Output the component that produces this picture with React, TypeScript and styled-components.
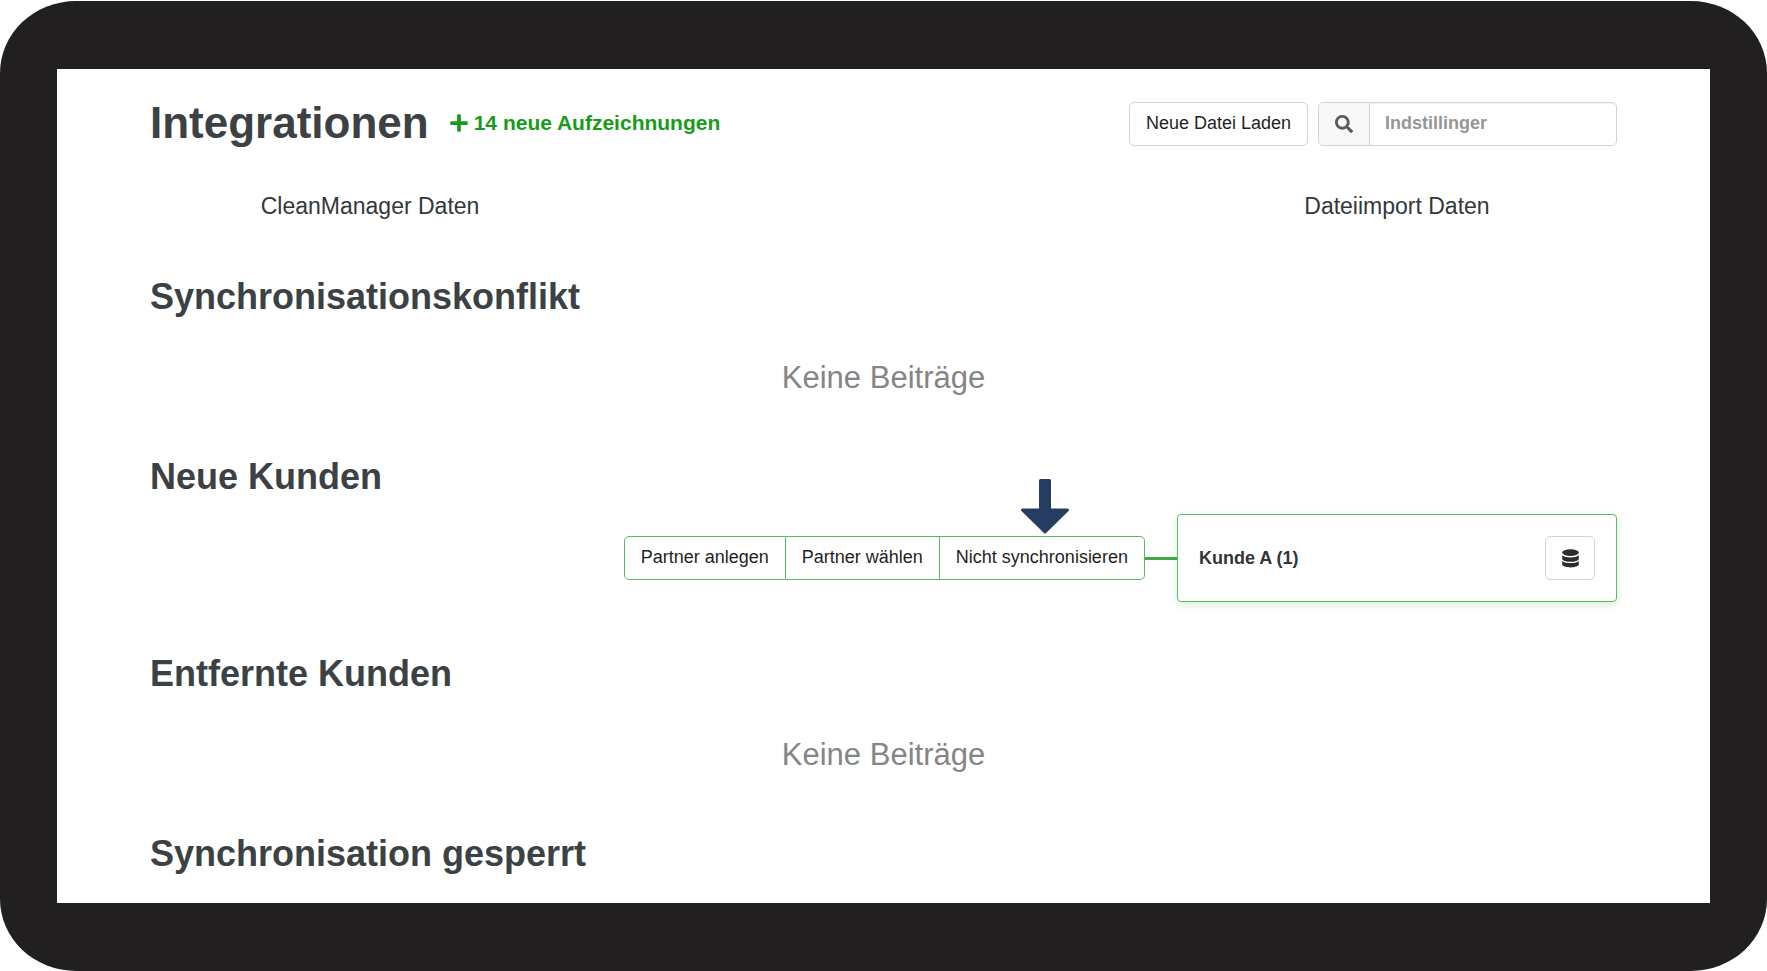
import React from "react";
import styled, { createGlobalStyle } from "styled-components";
import { FaPlus, FaSearch } from "react-icons/fa";

const GlobalStyle = createGlobalStyle`
  * { box-sizing: border-box; }
  body { margin: 0; background: #fff; }
  body, button, input {
    font-family: "Liberation Sans", Arial, Helvetica, sans-serif;
    font-size: 18px;
    color: #3c4143;
  }
`;

const Page = styled.div`
  min-height: 100vh;
  padding-top: 1px;
  display: flex;
`;

const Frame = styled.div`
  flex: 1;
  display: flex;
  padding: 68px 57px;
  background: #221f20;
  border-radius: 76px / 72px;
`;

const Screen = styled.main`
  flex: 1;
  min-width: 0;
  padding: 32px 93px 24px;
  background: #fff;
`;

const TopBar = styled.header`
  display: flex;
  align-items: center;
  gap: 20px;
  height: 46px;
`;

const Title = styled.h1`
  margin: 0;
  padding-bottom: 2px;
  font-size: 44px;
  line-height: 44px;
`;

const NewRecords = styled.a`
  display: flex;
  align-items: center;
  gap: 5px;
  margin-right: auto;
  padding-bottom: 2px;
  color: #189b1a;
  font-size: 21px;
  line-height: 24px;
  font-weight: 700;
  text-decoration: none;
`;

const Tools = styled.div`
  display: flex;
  gap: 10px;
`;

const Button = styled.button`
  display: flex;
  align-items: center;
  justify-content: center;
  height: 44px;
  padding: 0 16px 1px;
  color: #1f1f1f;
  background: #fff;
  border: 1px solid #d3d3d3;
  border-radius: 5px;
  white-space: nowrap;
`;

const IconButton = styled(Button)`
  width: 50px;
  padding: 0;
`;

const SearchBox = styled.label`
  display: flex;
  width: 299px;
  height: 44px;
  border: 1px solid #d3d3d3;
  border-radius: 5px;
`;

const SearchIcon = styled.span`
  display: flex;
  align-items: center;
  justify-content: center;
  width: 51px;
  background: #f8f8f8;
  border-right: 1px solid #d3d3d3;
  border-radius: 4px 0 0 4px;
  color: #5a5a5a;
`;

const SearchInput = styled.input`
  flex: 1;
  min-width: 0;
  padding: 0 15px 1px;
  border: 0;
  border-radius: 0 4px 4px 0;
  outline: 0;
  background: #fff;
  box-shadow: inset 0 1px 1px #0000000f;
  font-weight: 700;
  &::placeholder { color: #969696; opacity: 1; }
`;

const Columns = styled.div`
  display: flex;
  justify-content: space-between;
  margin: 45px 0 57px;
`;

const ColumnLabel = styled.div`
  width: 30%;
  text-align: center;
  font-size: 23px;
  line-height: 28px;
  color: #32383a;
`;

const Section = styled.section`
  margin-top: 52px;
`;

const SectionTitle = styled.h2`
  margin: 0;
  font-size: 36px;
  line-height: 40px;
`;

const Empty = styled.p`
  margin: 40px 0 58px;
  text-align: center;
  font-size: 31px;
  line-height: 42px;
  color: #858585;
`;

const MatchRow = styled.div`
  display: flex;
  align-items: center;
  justify-content: flex-end;
  margin-top: 17px;
`;

const ActionGroup = styled.div`
  position: relative;
  display: flex;
`;

const Action = styled(Button)`
  border-color: #5cb860;
  border-radius: 0;
  & + & { border-left: 0; }
  &:first-child { border-radius: 5px 0 0 5px; }
  &:last-of-type { border-radius: 0 5px 5px 0; }
`;

const Pointer = styled.svg`
  position: absolute;
  right: 76px;
  bottom: 46px;
  width: 48px;
  height: 55px;
  fill: #253d60;
  stroke: #253d60;
  stroke-width: 3;
  stroke-linejoin: round;
`;

const Connector = styled.div`
  width: 32px;
  height: 3px;
  background: #42a745;
`;

const Card = styled.article`
  display: flex;
  align-items: center;
  justify-content: space-between;
  width: 30%;
  height: 88px;
  padding: 0 21px;
  border: 1px solid #5cb860;
  border-radius: 4px;
  box-shadow: 0 3px 10px #3cb04033;
`;

const CardName = styled.strong`
  color: #303638;
`;

function DatabaseIcon() {
  return (
    <svg width="17" height="19" viewBox="0 0 17 19" fill="#2c2c2c" aria-hidden>
      <ellipse cx="8.5" cy="3.6" rx="8.3" ry="3.3" />
      <path d="M.2 6.3c1.8 1.8 5 2.1 8.3 2.1s6.5-.3 8.3-2.1v3.4c0 1.9-3.7 3.1-8.3 3.1S.2 11.6.2 9.700Z" />
      <path d="M.2 12c1.800 1.800 5 2.100 8.300 2.100s6.500-.3 8.300-2.100v3.300c0 1.900-3.700 3.100-8.300 3.100S.2 17.200.2 15.300Z" />
    </svg>
  );
}

export default function App() {
  return (
    <Page>
      <GlobalStyle />
      <Frame>
        <Screen>
          <TopBar>
            <Title>Integrationen</Title>
            <NewRecords href="#neue-kunden">
              <FaPlus size={20} aria-hidden />
              14 neue Aufzeichnungen
            </NewRecords>
            <Tools>
              <Button type="button">Neue Datei Laden</Button>
              <SearchBox>
                <SearchIcon>
                  <FaSearch size={18} aria-hidden />
                </SearchIcon>
                <SearchInput type="text" placeholder="Indstillinger" aria-label="Indstillinger" />
              </SearchBox>
            </Tools>
          </TopBar>

          <Columns>
            <ColumnLabel>CleanManager Daten</ColumnLabel>
            <ColumnLabel>Dateiimport Daten</ColumnLabel>
          </Columns>

          <Section>
            <SectionTitle>Synchronisationskonflikt</SectionTitle>
            <Empty>Keine Beiträge</Empty>
          </Section>

          <Section id="neue-kunden">
            <SectionTitle>Neue Kunden</SectionTitle>
            <MatchRow>
              <ActionGroup>
                <Action type="button">Partner anlegen</Action>
                <Action type="button">Partner wählen</Action>
                <Action type="button">Nicht synchronisieren</Action>
                <Pointer viewBox="0 0 48 55" aria-hidden>
                  <path d="M19.500 1.500H28.500V31H46.500L24 53L1.500 31H19.500Z" />
                </Pointer>
              </ActionGroup>
              <Connector />
              <Card>
                <CardName>Kunde A (1)</CardName>
                <IconButton type="button" aria-label="Daten anzeigen">
                  <DatabaseIcon />
                </IconButton>
              </Card>
            </MatchRow>
          </Section>

          <Section>
            <SectionTitle>Entfernte Kunden</SectionTitle>
            <Empty>Keine Beiträge</Empty>
          </Section>

          <Section>
            <SectionTitle>Synchronisation gesperrt</SectionTitle>
          </Section>
        </Screen>
      </Frame>
    </Page>
  );
}
